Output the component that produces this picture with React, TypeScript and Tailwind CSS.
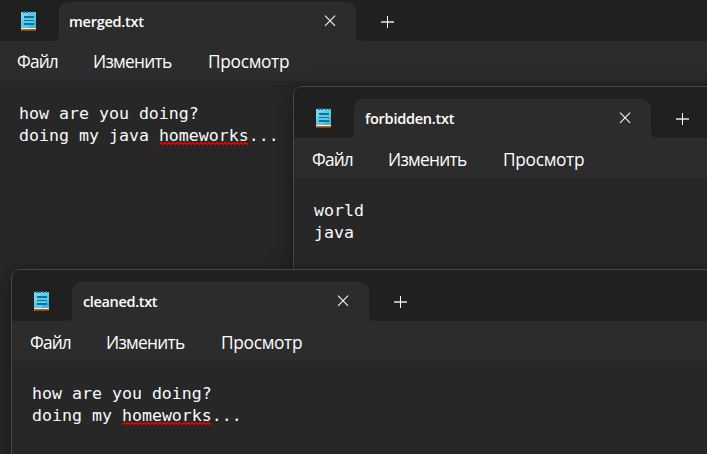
import React from "react";

function NotepadIcon() {
  return (
    <svg width="16" height="21" viewBox="0 0 16 21" shapeRendering="crispEdges">
      <rect x="0" y="18" width="15" height="2" fill="#b8600f" />
      <rect x="1" y="19" width="14" height="1" fill="#8d4207" />
      <rect x="0" y="17" width="15" height="1" fill="#f4f1ef" />
      <rect x="0" y="1" width="15" height="16" fill="#5fc8e8" />
      <path d="M0 1h9L0 12z" fill="#74d5f2" />
      <path d="M15 8v9H7z" fill="#48b5d8" />
      <path d="M2 0h2v2H2zM5 0h2v2H5zM9 0h1v2H9zM12 0h1v2h-1z" fill="#086b91" />
      <path d="M3 5h10v2H3zM3 9h10v1H3zM3 12h10v2H3z" fill="#0b7298" />
    </svg>
  );
}

function CloseIcon() {
  return (
    <svg width="12" height="12" viewBox="0 0 12 12" stroke="#f0f0f0" strokeWidth="1.15">
      <path d="M1 .7l10.1 10.1M11.1.7L1 10.8" />
    </svg>
  );
}

function PlusIcon() {
  return (
    <svg width="13" height="13" viewBox="0 0 13 13" shapeRendering="crispEdges">
      <path d="M0 5h13v2H0z" fill="#b4b4b4" />
      <path d="M6 0h1v12H6z" fill="#ffffff" />
    </svg>
  );
}

interface NotepadProps {
  title: string;
  titleClass: string;
  menuClass: string;
  className: string;
  children: React.ReactNode;
}

function Notepad({ title, titleClass, menuClass, className, children }: NotepadProps) {
  return (
    <section
      className={`absolute flex w-[900px] flex-col overflow-hidden rounded-tl-[9px] border border-[#474747] bg-[#272727] shadow-[0_4px_22px_rgba(0,0,0,0.38)] ${className}`}
    >
      <header className="flex h-[51px] shrink-0 bg-[#2c2c2c]">
        <div className="flex w-[60px] rounded-br-[5px] bg-[#202020] pl-[22px] pt-[21px]">
          <NotepadIcon />
        </div>
        <div className="w-[297px] bg-[#202020]">
          <div className="mt-3 flex h-[39px] items-center justify-between rounded-t-[9px] bg-[#2c2c2c] pl-[10px] pr-[20px]">
            <span
              className={`whitespace-nowrap font-['Open_Sans',sans-serif] text-[14.5px] font-semibold leading-5 text-white ${titleClass}`}
            >
              {title}
            </span>
            <div className="pb-px">
              <CloseIcon />
            </div>
          </div>
        </div>
        <div className="flex flex-1 rounded-bl-[5px] bg-[#202020] pl-[25px] pt-[26px]">
          <PlusIcon />
        </div>
      </header>
      <nav
        className={`flex h-[40px] shrink-0 items-center bg-[#2c2c2c] pl-[18px] font-['Open_Sans',sans-serif] text-[17.3px] text-white ${menuClass}`}
      >
        <span className="w-[76px] tracking-[-0.85px]">Файл</span>
        <span className="w-[115px] tracking-[-0.7px]">Изменить</span>
        <span className="tracking-[-0.3px]">Просмотр</span>
      </nav>
      <div className="flex-1 whitespace-pre pl-[20px] pt-[22px] font-['DejaVu_Sans_Mono',monospace] text-[16.6px] leading-[22px] text-[#fafafa]">
        {children}
      </div>
    </section>
  );
}

const squigglePath = Array.from(
  { length: 23 },
  (_, i) => `M${i * 4} 1h1v2h-1zM${i * 4 + 1} 0h1v2h-1zM${i * 4 + 2} 0h1v2h-1zM${i * 4 + 3} 1h1v2h-1z`,
).join("");

function Misspelled({ children }: { children: string }) {
  return (
    <span className="relative">
      {children}
      <svg className="absolute bottom-0 left-0 overflow-hidden" width="89" height="3" shapeRendering="crispEdges">
        <path d={squigglePath} fill="#e60000" />
      </svg>
    </span>
  );
}

export default function App() {
  return (
    <main className="relative h-[454px] w-[707px] overflow-hidden bg-[#272727]">
      <Notepad
        title="merged.txt"
        titleClass="tracking-[-0.25px]"
        menuClass="pt-[2px]"
        className="left-[-2px] top-[-11px] h-[600px]"
      >
        <p>how are you doing?</p>
        <p>
          doing my java <Misspelled>homeworks</Misspelled>...
        </p>
      </Notepad>
      <Notepad
        title="forbidden.txt"
        titleClass="pl-px tracking-[-0.25px]"
        menuClass="pt-1"
        className="left-[293px] top-[86px] h-[500px]"
      >
        <p>world</p>
        <p>java</p>
      </Notepad>
      <Notepad
        title="cleaned.txt"
        titleClass="pl-px tracking-[-0.35px]"
        menuClass="pt-1"
        className="left-[11px] top-[269px] h-[400px]"
      >
        <p>how are you doing?</p>
        <p>
          doing my <Misspelled>homeworks</Misspelled>...
        </p>
      </Notepad>
    </main>
  );
}
